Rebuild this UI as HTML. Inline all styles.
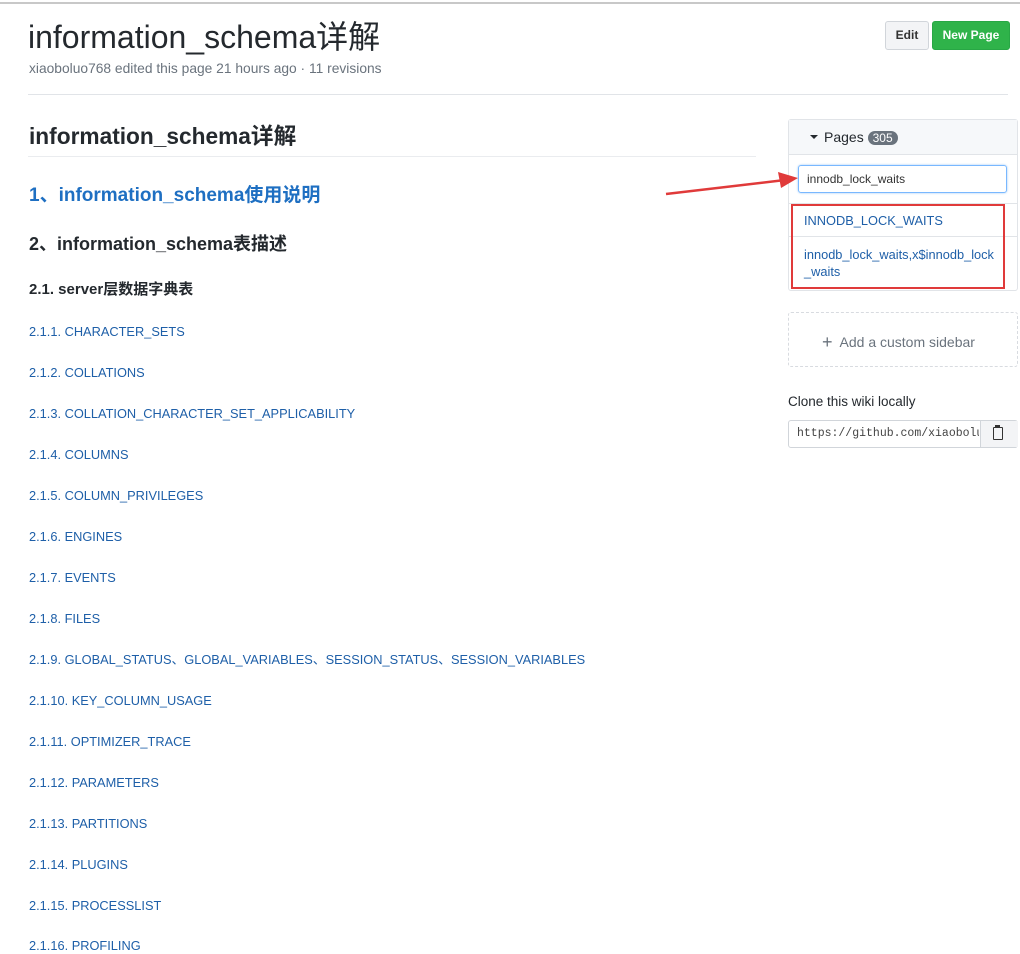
<!DOCTYPE html>
<html><head><meta charset="utf-8"><style>
body{margin:0;width:1020px;height:948px;overflow:hidden;background:#fff;font-family:"Liberation Sans","Noto Sans CJK SC",sans-serif;color:#24292e;position:relative}
.a{position:absolute;white-space:nowrap;line-height:1.2}
.lnk{color:#1e5fa8;font-size:12.8px;line-height:16px}
</style></head><body>
<div class="a" style="left:0;top:2px;width:1020px;height:2px;background:#c8c8c8"></div>
<div class="a" style="left:28px;top:18px;font-size:32px;color:#24292e">information_schema详解</div>
<div class="a" style="left:29px;top:61px;font-size:13.8px;color:#6a737d">xiaoboluo768 edited this page 21 hours ago · 11 revisions</div>
<div class="a" style="left:885px;top:21px;width:42px;height:27px;border:1px solid #d1d5da;border-radius:3px;background:#f3f4f6;font-size:12px;text-align:center;line-height:27px;font-weight:bold;color:#333">Edit</div>
<div class="a" style="left:932px;top:21px;width:76px;height:27px;border:1px solid #28a745;border-radius:3px;background:#2fb34a;font-size:12px;text-align:center;line-height:27px;font-weight:bold;color:#fff">New Page</div>
<div class="a" style="left:28px;top:94px;width:980px;height:1px;background:#e1e4e8"></div>
<div class="a" style="left:29px;top:123px;font-size:22.7px;font-weight:bold">information_schema详解</div>
<div class="a" style="left:28px;top:156px;width:728px;height:1px;background:#eaecef"></div>
<div class="a" style="left:29px;top:185px;font-size:19px;font-weight:bold;color:#1e6fc2">1、information_schema使用说明</div>
<div class="a" style="left:29px;top:234px;font-size:18px;font-weight:bold">2、information_schema表描述</div>
<div class="a" style="left:29px;top:281px;font-size:15px;font-weight:bold">2.1. server层数据字典表</div>
<div class="a lnk" style="left:29px;top:324px">2.1.1. CHARACTER_SETS</div>
<div class="a lnk" style="left:29px;top:365px">2.1.2. COLLATIONS</div>
<div class="a lnk" style="left:29px;top:406px">2.1.3. COLLATION_CHARACTER_SET_APPLICABILITY</div>
<div class="a lnk" style="left:29px;top:447px">2.1.4. COLUMNS</div>
<div class="a lnk" style="left:29px;top:488px">2.1.5. COLUMN_PRIVILEGES</div>
<div class="a lnk" style="left:29px;top:529px">2.1.6. ENGINES</div>
<div class="a lnk" style="left:29px;top:570px">2.1.7. EVENTS</div>
<div class="a lnk" style="left:29px;top:611px">2.1.8. FILES</div>
<div class="a lnk" style="left:29px;top:652px">2.1.9. GLOBAL_STATUS、GLOBAL_VARIABLES、SESSION_STATUS、SESSION_VARIABLES</div>
<div class="a lnk" style="left:29px;top:693px">2.1.10. KEY_COLUMN_USAGE</div>
<div class="a lnk" style="left:29px;top:734px">2.1.11. OPTIMIZER_TRACE</div>
<div class="a lnk" style="left:29px;top:775px">2.1.12. PARAMETERS</div>
<div class="a lnk" style="left:29px;top:816px">2.1.13. PARTITIONS</div>
<div class="a lnk" style="left:29px;top:857px">2.1.14. PLUGINS</div>
<div class="a lnk" style="left:29px;top:898px">2.1.15. PROCESSLIST</div>
<div class="a lnk" style="left:29px;top:938px">2.1.16. PROFILING</div>

<div class="a" style="left:788px;top:119px;width:228px;height:170px;border:1px solid #e1e4e8;border-radius:3px"></div>
<div class="a" style="left:789px;top:120px;width:228px;height:34px;background:#f6f8fa;border-bottom:1px solid #e1e4e8"></div>
<div class="a" style="left:810px;top:135px;width:0;height:0;border-left:4px solid transparent;border-right:4px solid transparent;border-top:4px solid #24292e"></div>
<div class="a" style="left:824px;top:129px;font-size:14px">Pages <span style="background:#6a737d;color:#fff;border-radius:9px;padding:0 5px;font-size:12px">305</span></div>
<div class="a" style="left:798px;top:165px;width:207px;height:26px;border:1px solid #79b8ff;border-radius:3px;box-shadow:0 0 2px #9cc8f5"></div>
<div class="a" style="left:807px;top:172px;font-size:12px;color:#333">innodb_lock_waits</div>
<div class="a" style="left:789px;top:203px;width:228px;height:1px;background:#e1e4e8"></div>
<div class="a" style="left:789px;top:236px;width:228px;height:1px;background:#e1e4e8"></div>
<div class="a" style="left:791px;top:204px;width:210px;height:81px;border:2px solid #e03a3a"></div>
<div class="a lnk" style="left:804px;top:213px">INNODB_LOCK_WAITS</div>
<div class="a lnk" style="left:804px;top:246px;line-height:17px;white-space:normal;word-break:break-all;width:192px">innodb_lock_waits,x$innodb_lock_waits</div>
<svg class="a" style="left:660px;top:168px" width="140" height="30"><line x1="6" y1="26" x2="125" y2="12" stroke="#e03a3a" stroke-width="2.5"/><polygon points="138,10 118,4 121,20" fill="#e03a3a"/></svg>

<div class="a" style="left:788px;top:312px;width:228px;height:53px;border:1px dashed #d8dbe0;border-radius:3px"></div>
<div class="a" style="left:822px;top:331px;font-size:14px;color:#6a737d"><span style="font-size:18px;position:relative;top:1px">+</span>&nbsp; Add a custom sidebar</div>
<div class="a" style="left:788px;top:394px;font-size:13.5px;color:#24292e">Clone this wiki locally</div>
<div class="a" style="left:788px;top:420px;width:228px;height:26px;border:1px solid #d1d5da;border-radius:3px"></div>
<div class="a" style="left:789px;top:421px;width:190px;height:26px;overflow:hidden;font-family:'Liberation Mono',monospace;font-size:11.5px;color:#444;line-height:26px;padding-left:8px;box-sizing:border-box">https://github.com/xiaoboluo768</div>
<div class="a" style="left:980px;top:421px;width:37px;height:26px;background:#f3f4f6;border-left:1px solid #d1d5da"></div>
<div class="a" style="left:993px;top:427px;width:8px;height:11px;border:1.5px solid #333;border-radius:1px"></div>
<div class="a" style="left:995px;top:425px;width:5px;height:3px;background:#333"></div>
</body></html>
